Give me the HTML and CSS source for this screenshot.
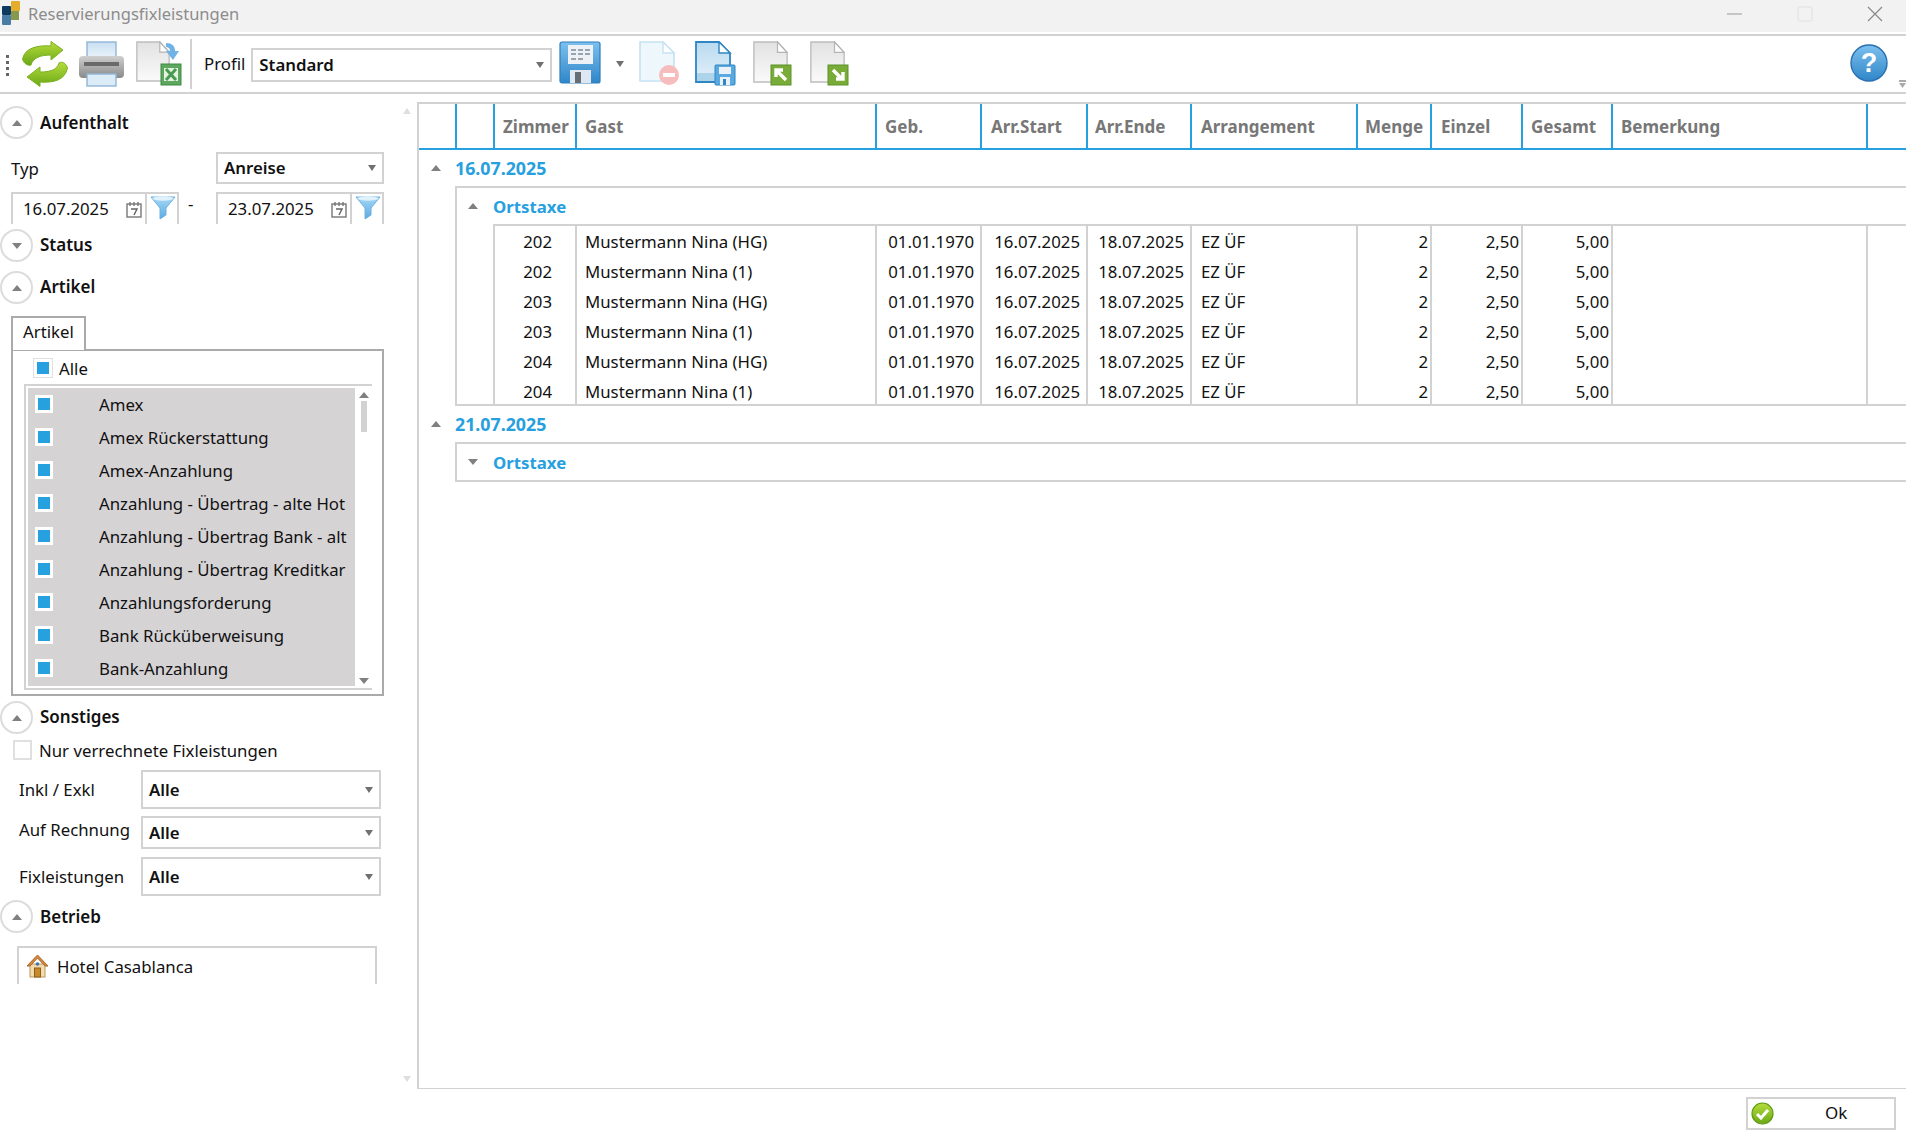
FILE: index.html
```html
<!DOCTYPE html>
<html lang="de">
  <head>
    <meta charset="UTF-8" />
    <title>Reservierungsfixleistungen</title>
    <link rel="stylesheet" href="styles.css">
  </head>
  <body>
    <svg class="defs" width="0" height="0">
      <defs>
        <linearGradient id="gGreen" x1="0" y1="0" x2="0" y2="1"><stop offset="0" stop-color="#b6dc3c"/><stop offset="1" stop-color="#6aa816"/></linearGradient>
        <linearGradient id="gPage" x1="0" y1="0" x2="0" y2="1"><stop offset="0" stop-color="#e2e2e2"/><stop offset="1" stop-color="#fafafa"/></linearGradient>
        <linearGradient id="gBlue" x1="0" y1="0" x2="0" y2="1"><stop offset="0" stop-color="#7cc0ee"/><stop offset="1" stop-color="#2f86c8"/></linearGradient>
        <linearGradient id="gFunnel" x1="0" y1="0" x2="0" y2="1"><stop offset="0" stop-color="#a5d8f5"/><stop offset="1" stop-color="#5aaae2"/></linearGradient>
        <linearGradient id="gPaper" x1="0" y1="0" x2="0" y2="1"><stop offset="0" stop-color="#c9dff2"/><stop offset="1" stop-color="#eef6fc"/></linearGradient>
        <linearGradient id="gDoc" x1="0" y1="0" x2="0" y2="1"><stop offset="0" stop-color="#b9daef"/><stop offset="1" stop-color="#e4f1f9"/></linearGradient>
        <linearGradient id="gPrinter" x1="0" y1="0" x2="0" y2="1"><stop offset="0" stop-color="#cfcfcf"/><stop offset="1" stop-color="#8a8a8a"/></linearGradient>
        <symbol id="funnel" viewBox="0 0 26 26">
          <path d="M1 3h24l-9 11v7l-6 4V14z" fill="url(#gFunnel)" stroke="#6db2e2" stroke-width="1"/>
          <ellipse cx="13" cy="4.500" rx="10.500" ry="2.200" fill="#dff1fb"/>
        </symbol>
        <symbol id="calendar" viewBox="0 0 16 17">
          <rect x="1" y="3" width="14" height="13" fill="#fff" stroke="#777" stroke-width="1.4"/>
          <path d="M4 1v4M8 1v4M12 1v4" stroke="#777" stroke-width="1.4"/>
          <path d="M5 8h6l-3 6" fill="none" stroke="#666" stroke-width="1.5"/>
        </symbol>
        <symbol id="page" viewBox="0 0 40 44" preserveAspectRatio="none">
          <path d="M1 1h27l11 11v31H1z" fill="url(#gPage)" stroke="#bdbdbd" stroke-width="1.6"/>
          <path d="M28 1v11h11z" fill="#fff" stroke="#b4b4b4" stroke-width="1.4"/>
        </symbol>
      </defs>
    </svg>

    <div class="title-bar">
      <svg class="app-logo" width="20" height="25" viewBox="0 0 20 25">
        <rect x="2" y="6" width="9" height="9" rx="1" fill="#0f3a60"/>
        <rect x="11" y="1" width="9" height="10" rx="1" fill="#e4ae2c"/>
        <rect x="11" y="11" width="8" height="9" fill="#87994e"/>
        <rect x="2" y="15" width="9" height="10" rx="1" fill="#4a7da6"/>
      </svg>
      <span class="title-text">Reservierungsfixleistungen</span>
      <div class="window-buttons">
        <svg width="16" height="16" viewBox="0 0 16 16"><path d="M0 8h15" stroke="#999" stroke-width="1"/></svg>
        <svg width="16" height="16" viewBox="0 0 16 16"><rect x="1" y="1" width="14" height="14" rx="1.5" fill="none" stroke="#e0e0e0" stroke-width="1"/></svg>
        <svg width="16" height="16" viewBox="0 0 16 16"><path d="M1 1l14 14M15 1L1 15" stroke="#888" stroke-width="1.2"/></svg>
      </div>
    </div>

    <div class="toolbar">
      <div class="grip"><i></i><i></i><i></i><i></i></div>
      <svg class="tool tool-refresh" width="46" height="46" viewBox="0 0 46 46">
        <path d="M29 5C15 4 3 7 .5 18 2 23 6 25 9 24 11 17 18 14 29 14v5L41 9 29 .5z" fill="url(#gGreen)" stroke="#7cb022" stroke-width="1"/>
        <path d="M18 41C32 42 43 39 45.500 27 44 22 40 20 37 22 35 29 28 31 18 31v-5L5 36l13 9.500z" fill="url(#gGreen)" stroke="#7cb022" stroke-width="1"/>
      </svg>
      <svg class="tool tool-print" width="47" height="46" viewBox="0 0 47 46">
        <rect x="9" y="1" width="29" height="18" fill="url(#gPaper)" stroke="#8fb5d6" stroke-width="1.4"/>
        <rect x="1" y="15" width="45" height="22" rx="4" fill="url(#gPrinter)"/>
        <rect x="6" y="21" width="35" height="4" fill="#6a6a6a"/>
        <rect x="9" y="33" width="29" height="12" fill="#dcebf8" stroke="#8fb5d6" stroke-width="1.4"/>
      </svg>
      <svg class="tool tool-excel" width="46" height="46" viewBox="0 0 46 46">
        <use href="#page" x="0" y="0" width="34" height="41"/>
        <path d="M30 2c6 0 9 3 9 8h4l-6 9-7-9h4c0-3-2-4-4-4z" fill="#6eb2e6"/>
        <rect x="25" y="23" width="20" height="21" fill="#5da85e" stroke="#3f8a45" stroke-width="1"/>
        <rect x="28" y="27" width="14" height="13" fill="#e4f2e2"/>
        <path d="M30 28l10 11M40 28L30 39" stroke="#4a9a50" stroke-width="3"/>
      </svg>
      <div class="tool-sep"></div>
      <span class="profile-label">Profil</span>
      <div class="combo combo-profile"><b>Standard</b><i class="caret"></i></div>
      <svg class="tool tool-save" width="42" height="43" viewBox="0 0 42 43">
        <path d="M3 1h36a2 2 0 0 1 2 2v37a2 2 0 0 1-2 2H3a2 2 0 0 1-2-2V3a2 2 0 0 1 2-2z" fill="url(#gBlue)" stroke="#2c7fbd" stroke-width="1.2"/>
        <rect x="9" y="4" width="25" height="19" fill="#eef2f6"/>
        <path d="M12 9h5M19 9h5M26 9h5M12 13h5M19 13h5M26 13h5M12 18h5M19 18h5" stroke="#7c8a96" stroke-width="1.3"/>
        <rect x="11" y="29" width="21" height="13" fill="#dfe7f2"/>
        <rect x="16" y="31" width="6" height="11" fill="#666d75"/>
      </svg>
      <i class="caret caret-save"></i>
      <svg class="tool tool-remove" width="42" height="45" viewBox="0 0 42 45">
        <path d="M2 1h23l11 11v28H2z" fill="#eef7fc" stroke="#c6e2f2" stroke-width="1.6"/>
        <path d="M25 1v11h11z" fill="#fff" stroke="#c6e2f2" stroke-width="1.4"/>
        <circle cx="31" cy="34" r="10" fill="#f7bcbc"/>
        <rect x="25" y="32" width="12" height="4" fill="#fff"/>
      </svg>
      <svg class="tool tool-docsave" width="42" height="45" viewBox="0 0 42 45">
        <path d="M2 1h23l11 11v29H2z" fill="url(#gDoc)" stroke="#2e86c4" stroke-width="1.8"/>
        <rect x="3" y="32" width="32" height="8" fill="#aed4ea"/>
        <path d="M25 1v11h11z" fill="#fff" stroke="#2e86c4" stroke-width="1.4"/>
        <rect x="21" y="24" width="20" height="20" rx="1" fill="#5aa9e0" stroke="#2e86c4" stroke-width="1"/>
        <rect x="25" y="26" width="12" height="7" fill="#eaf2f8"/>
        <rect x="26" y="36" width="10" height="8" fill="#eaf2f8"/>
        <rect x="29" y="38" width="3" height="6" fill="#2e86c4"/>
      </svg>
      <svg class="tool tool-import" width="39" height="45" viewBox="0 0 39 45">
        <use href="#page" x="0" y="0" width="35" height="42"/>
        <rect x="18" y="24" width="20" height="20" fill="#78ab38" stroke="#5f9228" stroke-width="1"/>
        <path d="M33 39L24 30M23 36v-7h7" fill="none" stroke="#fff" stroke-width="3.4"/>
      </svg>
      <svg class="tool tool-export" width="39" height="45" viewBox="0 0 39 45">
        <use href="#page" x="0" y="0" width="35" height="42"/>
        <rect x="18" y="24" width="20" height="20" fill="#78ab38" stroke="#5f9228" stroke-width="1"/>
        <path d="M23 29l9 9M33 31v7h-7" fill="none" stroke="#fff" stroke-width="3.4"/>
      </svg>
      <svg class="tool tool-help" width="38" height="38" viewBox="0 0 38 38">
        <circle cx="19" cy="19" r="18" fill="url(#gBlue)" stroke="#2a6fb0" stroke-width="1.4"/>
        <text x="19" y="28" text-anchor="middle" class="help-mark">?</text>
      </svg>
      <svg class="overflow-mark" width="7" height="8" viewBox="0 0 7 8">
        <path d="M0 1h7" stroke="#aaa" stroke-width="2"/>
        <path d="M0 3h7L3.500 8z" fill="#aaa"/>
      </svg>
    </div>

    <div class="main">
      <div class="filters">
        <div class="section section-first"><span class="circle"><i class="arrow-up"></i></span><b>Aufenthalt</b></div>
        <div class="type-row">
          <span class="type-label">Typ</span>
          <div class="combo combo-type"><b>Anreise</b><i class="caret"></i></div>
        </div>
        <div class="date-row">
          <div class="date-box">
            <span class="date-value">16.07.2025</span>
            <svg class="cal" width="16" height="17"><use href="#calendar"/></svg>
            <span class="date-filter"><svg width="26" height="26"><use href="#funnel"/></svg></span>
          </div>
          <span class="date-dash">-</span>
          <div class="date-box">
            <span class="date-value">23.07.2025</span>
            <svg class="cal" width="16" height="17"><use href="#calendar"/></svg>
            <span class="date-filter"><svg width="26" height="26"><use href="#funnel"/></svg></span>
          </div>
        </div>
        <div class="section section-status"><span class="circle"><i class="arrow-down"></i></span><b>Status</b></div>
        <div class="section section-tight"><span class="circle"><i class="arrow-up"></i></span><b>Artikel</b></div>

        <div class="tab">Artikel</div>
        <div class="tab-body">
          <div class="all-row"><span class="check-all"></span>Alle</div>
          <div class="list-frame">
            <div class="list-items">
              <div class="item"><span class="check"></span><span class="item-text">Amex</span></div>
              <div class="item"><span class="check"></span><span class="item-text">Amex Rückerstattung</span></div>
              <div class="item"><span class="check"></span><span class="item-text">Amex-Anzahlung</span></div>
              <div class="item"><span class="check"></span><span class="item-text">Anzahlung - Übertrag - alte Hot</span></div>
              <div class="item"><span class="check"></span><span class="item-text">Anzahlung - Übertrag Bank - alt</span></div>
              <div class="item"><span class="check"></span><span class="item-text">Anzahlung - Übertrag Kreditkar</span></div>
              <div class="item"><span class="check"></span><span class="item-text">Anzahlungsforderung</span></div>
              <div class="item"><span class="check"></span><span class="item-text">Bank Rücküberweisung</span></div>
              <div class="item"><span class="check"></span><span class="item-text">Bank-Anzahlung</span></div>
            </div>
            <div class="list-scroll">
              <i class="arrow-up"></i>
              <span class="list-thumb"></span>
              <i class="arrow-down arrow-end"></i>
            </div>
          </div>
        </div>

        <div class="section section-other"><span class="circle"><i class="arrow-up"></i></span><b>Sonstiges</b></div>
        <div class="only-row"><span class="check-empty"></span>Nur verrechnete Fixleistungen</div>
        <div class="field-row field-inkl"><span>Inkl / Exkl</span><div class="combo"><b>Alle</b><i class="caret"></i></div></div>
        <div class="field-row field-rechnung"><span>Auf Rechnung</span><div class="combo"><b>Alle</b><i class="caret"></i></div></div>
        <div class="field-row field-fix"><span>Fixleistungen</span><div class="combo"><b>Alle</b><i class="caret"></i></div></div>
        <div class="section section-betrieb"><span class="circle"><i class="arrow-up"></i></span><b>Betrieb</b></div>
        <div class="hotel-box">
          <svg width="23" height="24" viewBox="0 0 23 24">
            <rect x="4" y="10" width="15" height="13" fill="#f3dcae" stroke="#b89a66" stroke-width="1"/>
            <path d="M11.500 1L1 12h3l7.500-8 7.500 8h3z" fill="#d98a3c" stroke="#a8662a" stroke-width="1"/>
            <rect x="8.500" y="14" width="6" height="9" fill="#c98a2c" stroke="#8d5f1e" stroke-width="1"/>
            <circle cx="11.500" cy="10" r="1.800" fill="#3c78b8"/>
          </svg>
          <span>Hotel Casablanca</span>
        </div>
        <i class="side-up"></i>
        <i class="side-down"></i>
      </div>

      <div class="grid-wrap">
        <div class="grid">
          <div class="grid-head">
            <div class="hc hc-a"></div>
            <div class="hc hc-b"></div>
            <div class="hc hc-zimmer">Zimmer</div>
            <div class="hc hc-gast">Gast</div>
            <div class="hc hc-geb">Geb.</div>
            <div class="hc hc-start">Arr.Start</div>
            <div class="hc hc-ende">Arr.Ende</div>
            <div class="hc hc-arr">Arrangement</div>
            <div class="hc hc-menge">Menge</div>
            <div class="hc hc-einzel">Einzel</div>
            <div class="hc hc-gesamt">Gesamt</div>
            <div class="hc hc-bem">Bemerkung</div>
          </div>

          <div class="group-row"><i class="arrow-up"></i><span>16.07.2025</span></div>
          <div class="group-body">
            <div class="sub-row"><i class="arrow-up"></i><span>Ortstaxe</span></div>
            <div class="rows">
              <div class="row"><div class="c-room">202</div><div class="c-name">Mustermann Nina (HG)</div><div class="c-num">01.01.1970</div><div class="c-num">16.07.2025</div><div class="c-num">18.07.2025</div><div class="c-arr">EZ ÜF</div><div class="c-qty">2</div><div class="c-money">2,50</div><div class="c-money">5,00</div><div class="c-empty"></div></div>
              <div class="row"><div class="c-room">202</div><div class="c-name">Mustermann Nina (1)</div><div class="c-num">01.01.1970</div><div class="c-num">16.07.2025</div><div class="c-num">18.07.2025</div><div class="c-arr">EZ ÜF</div><div class="c-qty">2</div><div class="c-money">2,50</div><div class="c-money">5,00</div><div class="c-empty"></div></div>
              <div class="row"><div class="c-room">203</div><div class="c-name">Mustermann Nina (HG)</div><div class="c-num">01.01.1970</div><div class="c-num">16.07.2025</div><div class="c-num">18.07.2025</div><div class="c-arr">EZ ÜF</div><div class="c-qty">2</div><div class="c-money">2,50</div><div class="c-money">5,00</div><div class="c-empty"></div></div>
              <div class="row"><div class="c-room">203</div><div class="c-name">Mustermann Nina (1)</div><div class="c-num">01.01.1970</div><div class="c-num">16.07.2025</div><div class="c-num">18.07.2025</div><div class="c-arr">EZ ÜF</div><div class="c-qty">2</div><div class="c-money">2,50</div><div class="c-money">5,00</div><div class="c-empty"></div></div>
              <div class="row"><div class="c-room">204</div><div class="c-name">Mustermann Nina (HG)</div><div class="c-num">01.01.1970</div><div class="c-num">16.07.2025</div><div class="c-num">18.07.2025</div><div class="c-arr">EZ ÜF</div><div class="c-qty">2</div><div class="c-money">2,50</div><div class="c-money">5,00</div><div class="c-empty"></div></div>
              <div class="row"><div class="c-room">204</div><div class="c-name">Mustermann Nina (1)</div><div class="c-num">01.01.1970</div><div class="c-num">16.07.2025</div><div class="c-num">18.07.2025</div><div class="c-arr">EZ ÜF</div><div class="c-qty">2</div><div class="c-money">2,50</div><div class="c-money">5,00</div><div class="c-empty"></div></div>
            </div>
          </div>
          <div class="group-row"><i class="arrow-up"></i><span>21.07.2025</span></div>
          <div class="closed-sub"><i class="arrow-down"></i><span>Ortstaxe</span></div>
        </div>
        <div class="footer">
          <button class="ok-button">
            <svg width="23" height="23" viewBox="0 0 23 23">
              <circle cx="11.500" cy="11.500" r="10.500" fill="url(#gGreen)" stroke="#5f9c12" stroke-width="1.200"/>
              <path d="M6 12l4 4 7-8" fill="none" stroke="#fff" stroke-width="3"/>
            </svg>
            <span>Ok</span>
          </button>
        </div>
      </div>
    </div>
  </body>
</html>
```

FILE: styles.css
```css
* {
  box-sizing: border-box;
}
html,
body {
  margin: 0;
  height: 100%;
  overflow: hidden;
}
body {
  font-family: "Noto Sans", "Open Sans", sans-serif;
  font-size: 16.8px;
  color: #111;
  background-color: white;
  display: flex;
  flex-direction: column;
}
.defs {
  position: absolute;
}

/* Title bar */
.title-bar {
  height: 36px;
  flex: none;
  display: flex;
  align-items: flex-start;
  background-color: #f2f2f2;
  border-bottom: 2px solid #d2d2d2;
  box-shadow: inset 0 -2px 0 white;
}
.title-text {
  margin-left: 8px;
  color: #8c8c8c;
  font-size: 16.5px;
  line-height: 28px;
}
.window-buttons {
  margin-left: auto;
  padding-top: 6px;
  padding-right: 23px;
  display: flex;
  gap: 54px;
}

/* Toolbar */
.toolbar {
  height: 58px;
  flex: none;
  display: flex;
  align-items: flex-start;
  border-bottom: 2px solid #d2d2d2;
  position: relative;
}
.grip {
  margin: 19px 0 0 6px;
  width: 3px;
  display: flex;
  flex-direction: column;
  gap: 3px;
}
.grip i {
  display: block;
  width: 3px;
  height: 3px;
  background-color: #666;
}
.tool {
  flex: none;
  margin-top: 5px;
}
.tool-refresh {
  margin-left: 13px;
}
.tool-print {
  margin-left: 10px;
}
.tool-excel {
  margin-left: 11px;
}
.tool-sep {
  width: 2px;
  height: 50px;
  margin: 3px 0 0 8px;
  background-color: #d2d2d2;
}
.profile-label {
  margin-left: 12px;
  line-height: 55px;
}
.combo {
  height: 34px;
  border: 2px solid #d2d2d2;
  display: flex;
  align-items: center;
  padding-left: 6px;
  padding-right: 6px;
  background-color: white;
}
.combo b {
  font-weight: 600;
  flex: 1;
}
.combo-profile {
  width: 301px;
  margin: 12px 0 0 6px;
}
.combo-profile b,
.combo-type b {
  margin-bottom: 2px;
}
.caret {
  display: block;
  width: 0;
  height: 0;
  border-left: 4.500px solid transparent;
  border-right: 4.500px solid transparent;
  border-top: 6px solid #707070;
}
.tool-save {
  margin-left: 7px;
}
.caret-save {
  margin: 25px 0 0 15px;
}
.tool-remove {
  margin-left: 14px;
}
.tool-docsave {
  margin-left: 14px;
}
.tool-import {
  margin-left: 17px;
}
.tool-export {
  margin-left: 18px;
}
.tool-help {
  margin-left: auto;
  margin-top: 8px;
  margin-right: 18px;
}
.help-mark {
  fill: white;
  font-size: 27px;
  font-weight: 700;
  font-family: "Liberation Sans", sans-serif;
}
.overflow-mark {
  position: absolute;
  right: 0;
  top: 44px;
}

/* Filters on the left */
.main {
  flex: 1;
  display: flex;
  min-height: 0;
}
.filters {
  width: 417px;
  flex: none;
  position: relative;
  padding-top: 12px;
}
.section {
  height: 33px;
  display: flex;
  align-items: center;
}
.section b {
  margin-left: 7px;
  margin-bottom: 2px;
  font-size: 17px;
  font-weight: 600;
}
.section-first b,
.section-betrieb b {
  margin-bottom: 0;
}
.circle {
  width: 33px;
  height: 33px;
  border: 2px solid #dcdcdc;
  border-radius: 50%;
  display: flex;
  align-items: center;
  justify-content: center;
}
.arrow-up,
.arrow-down {
  display: block;
  width: 0;
  height: 0;
  border-left: 5px solid transparent;
  border-right: 5px solid transparent;
}
.arrow-up {
  border-bottom: 6px solid #808080;
}
.arrow-down {
  border-top: 6px solid #808080;
}
.type-row {
  display: flex;
  align-items: center;
  margin-top: 13px;
  height: 32px;
}
.type-label {
  margin-left: 11px;
  width: 205px;
}
.combo-type {
  width: 168px;
  height: 32px;
}
.date-row {
  display: flex;
  margin-top: 8px;
  height: 32px;
  padding-left: 11px;
}
.date-box {
  width: 168px;
  height: 32px;
  border: 2px solid #d2d2d2;
  border-bottom: none;
  display: flex;
  align-items: center;
  padding-left: 10px;
}
.date-value {
  flex: 1;
  margin-bottom: 2px;
}
.cal {
  margin-right: 3px;
}
.date-filter {
  border-left: 2px solid #d2d2d2;
  width: 32px;
  height: 30px;
  padding-left: 3px;
}
.date-dash {
  width: 37px;
  padding-left: 9px;
  line-height: 24px;
}
.section-status {
  margin-top: 5px;
}
.section-tight {
  margin-top: 9px;
}
.tab {
  width: 75px;
  height: 34px;
  margin: 12px 0 -1px 11px;
  border: 2px solid #aaa;
  border-bottom: none;
  padding-left: 10px;
  line-height: 28px;
  background-color: white;
  position: relative;
}
.tab-body {
  width: 373px;
  height: 347px;
  margin-left: 11px;
  border: 2px solid #aaa;
  padding: 7px 10px 0 11px;
}
.all-row {
  height: 20px;
  display: flex;
  align-items: center;
  gap: 6px;
  padding-left: 9px;
  margin-bottom: 6px;
}
.check-all {
  width: 20px;
  height: 20px;
  border: 4px solid white;
  outline: 1px solid #e0e0e0;
  outline-offset: -1px;
  background-color: #27a0e0;
}
.list-frame {
  height: 306px;
  border-top: 2px solid #d2d2d2;
  border-bottom: 2px solid #d2d2d2;
  border-left: 2px solid #d2d2d2;
  display: flex;
  padding: 2px 0 2px 2px;
}
.list-items {
  width: 327px;
  background-color: #d6d3d5;
  overflow: hidden;
}
.item {
  height: 33px;
  display: flex;
  align-items: center;
  padding-left: 7px;
}
.check {
  width: 18px;
  height: 18px;
  flex: none;
  border: 3px solid white;
  background-color: #27a0e0;
  margin-bottom: 1px;
}
.item-text {
  margin-left: 46px;
  width: 250px;
  overflow: hidden;
  white-space: nowrap;
  margin-bottom: 1px;
}
.list-scroll {
  flex: 1;
  display: flex;
  flex-direction: column;
  align-items: center;
  padding-top: 4px;
}
.list-thumb {
  width: 6px;
  height: 31px;
  margin-top: 3px;
  background-color: #d2d2d2;
}
.arrow-end {
  margin-top: auto;
  margin-bottom: 2px;
}
.section-other {
  margin-top: 5px;
}
.only-row {
  height: 20px;
  margin: 6px 0 0 13px;
  display: flex;
  align-items: center;
  gap: 7px;
}
.check-empty {
  width: 19px;
  height: 20px;
  border: 2px solid #e0e0e0;
}
.field-row {
  display: flex;
  align-items: center;
  width: 381px;
  padding-left: 19px;
}
.field-row span {
  width: 122px;
}
.field-row .combo {
  width: 240px;
  height: 100%;
}
.field-inkl {
  height: 39px;
  margin-top: 10px;
}
.field-rechnung {
  height: 33px;
  margin-top: 7px;
}
.field-rechnung span {
  padding-bottom: 7px;
}
.field-fix {
  height: 39px;
  margin-top: 8px;
}
.section-betrieb {
  margin-top: 4px;
}
.hotel-box {
  width: 360px;
  height: 38px;
  margin: 13px 0 0 17px;
  border: 2px solid #d2d2d2;
  border-bottom: none;
  display: flex;
  align-items: center;
  gap: 8px;
  padding-left: 7px;
}
.side-up,
.side-down {
  position: absolute;
  right: 6px;
  width: 0;
  height: 0;
  border-left: 4.500px solid transparent;
  border-right: 4.500px solid transparent;
}
.side-up {
  top: 14px;
  border-bottom: 6px solid #dedede;
}
.side-down {
  top: 982px;
  border-top: 6px solid #dedede;
}

/* Grid */
.grid-wrap {
  flex: 1;
  min-width: 0;
  display: flex;
  flex-direction: column;
  padding-top: 8px;
}
.grid {
  height: 987px;
  border-top: 2px solid #d2d2d2;
  border-left: 2px solid #d2d2d2;
  border-bottom: 1px solid #d2d2d2;
}
.grid-head {
  height: 46px;
  display: flex;
  border-bottom: 2px solid #27a0e0;
}
.hc {
  flex: none;
  border-right: 2px solid #27a0e0;
  padding-left: 8px;
  line-height: 45px;
  font-size: 17px;
  color: #777;
  font-weight: 700;
  white-space: nowrap;
}
.hc-a { width: 38px; }
.hc-b { width: 38px; }
.hc-zimmer { width: 82px; }
.hc-gast { width: 300px; }
.hc-geb { width: 105px; }
.hc-start { width: 106px; padding-left: 9px; }
.hc-ende { width: 104px; padding-left: 7px; }
.hc-arr { width: 166px; padding-left: 9px; }
.hc-menge { width: 74px; padding-left: 7px; }
.hc-einzel { width: 91px; padding-left: 9px; }
.hc-gesamt { width: 90px; }
.hc-bem { width: 255px; }

.group-row,
.sub-row,
.closed-sub {
  display: flex;
  align-items: center;
  color: #27a0e0;
  font-weight: 700;
}
.group-row {
  height: 36px;
  padding-left: 12px;
}
.group-row span {
  margin-left: 14px;
  font-size: 17.8px;
}
.sub-row span,
.closed-sub span {
  margin-left: 15px;
}
.group-body {
  margin-left: 36px;
  height: 220px;
  border-top: 2px solid #d2d2d2;
  border-left: 2px solid #d2d2d2;
  border-bottom: 2px solid #d2d2d2;
}
.sub-row {
  height: 36px;
  padding-left: 11px;
}
.rows {
  margin-left: 36px;
  height: 180px;
  border-top: 2px solid #d2d2d2;
  border-left: 2px solid #d2d2d2;
  overflow: hidden;
}
.row {
  height: 30px;
  display: grid;
  grid-template-columns: 82px 300px 105px 106px 104px 166px 74px 91px 90px 255px;
  line-height: 31px;
  white-space: nowrap;
}
.row > div {
  border-right: 2px solid #d2d2d2;
}
.c-room {
  text-align: right;
  padding-right: 23px;
}
.c-name {
  padding-left: 8px;
}
.c-arr {
  padding-left: 9px;
}
.c-num {
  text-align: right;
  padding-right: 6px;
}
.c-qty,
.c-money {
  text-align: right;
  padding-right: 2px;
}
.closed-sub {
  margin-left: 36px;
  height: 40px;
  border: 2px solid #d2d2d2;
  border-right: none;
  padding-left: 11px;
}
.footer {
  flex: 1;
  display: flex;
  justify-content: flex-end;
  align-items: flex-start;
  padding: 8px 10px 0 0;
}
.ok-button {
  width: 150px;
  height: 33px;
  border: 2px solid #d2d2d2;
  background-color: white;
  padding: 0 0 0 3px;
  display: flex;
  align-items: center;
  font-family: inherit;
  font-size: 17px;
  color: #111;
}
.ok-button span {
  margin-left: 51px;
  margin-bottom: 2px;
}
```
